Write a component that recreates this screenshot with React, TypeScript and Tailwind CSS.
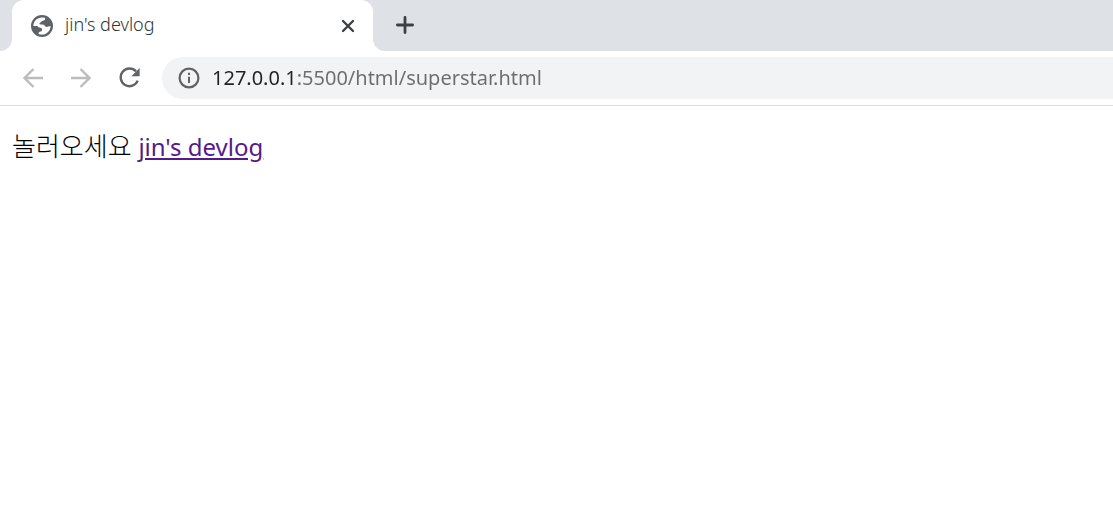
import { useState } from 'react'

function GlobeIcon() {
    return (
        <svg width="22" height="22" viewBox="0 0 22 22" aria-hidden="true">
            <circle cx="11" cy="11" r="11" fill="#5f6368" />
            <path
                d="M2.4 11C2.4 6.2 6 2.5 10.8 2.4L14 2.8C14.6 4.4 13.8 5.4 12 5.7C10.6 6 10.4 7 9.4 7.4C8 7.9 8.2 9.4 9.6 9.6H12C13.8 9.8 13.8 11.8 15.4 12C17 12.1 17.8 11 19.6 11C19.5 15.8 15.8 19.5 11 19.6C9.8 19.6 8.8 19.4 7.6 19C7.4 17.6 8.4 16.8 9.6 16.5C11 16.2 11.2 15.4 11 14.2C10.8 13 9.6 12.8 8.4 12.6C6.8 12.4 7.4 11 5.8 11Z"
                fill="#fff"
            />
        </svg>
    )
}

function ArrowIcon({ className = '' }) {
    return (
        <svg width="20" height="20" viewBox="0 0 20 20" fill="none" stroke="currentColor" strokeWidth="2.4" className={className} aria-hidden="true">
            <path d="M20 10H2M10.5 1L1.5 10L10.5 19" />
        </svg>
    )
}

function ReloadIcon() {
    return (
        <svg width="22" height="22" viewBox="0 0 22 22" aria-hidden="true">
            <path d="M17 4.4A8.8 8.8 0 1 0 18.7 13.6" fill="none" stroke="#5f6368" strokeWidth="2.4" />
            <path d="M20.6 1V9.2H12.4Z" fill="#5f6368" />
        </svg>
    )
}

function InfoIcon() {
    return (
        <svg width="22" height="22" viewBox="0 0 22 22" aria-hidden="true">
            <circle cx="11" cy="11" r="9.4" fill="none" stroke="#5f6368" strokeWidth="2.2" />
            <path d="M10 5.8H12V8H10ZM10 9.8H12V16H10Z" fill="#5f6368" />
        </svg>
    )
}

export default function App() {
    const [url, setUrl] = useState('127.0.0.1:5500/html/superstar.html')

    return (
        <div className="min-h-screen bg-white font-['Noto_Sans','Noto_Sans_CJK_KR',sans-serif]">
            {/* Tab strip */}
            <div className="flex h-[51px] bg-white">
                <div className="w-3 rounded-br-xl bg-[#dee1e6]" />
                <div className="w-[361px] bg-[#dee1e6]">
                    <div className="flex h-full items-center rounded-t-xl bg-white pr-4 pl-[19px]">
                        <GlobeIcon />
                        <span className="ml-3 flex-1 pb-0.5 text-[18px] font-light text-[#303336]">jin's devlog</span>
                        <button type="button" aria-label="Close tab" className="p-0.5">
                            <svg width="14" height="14" viewBox="0 0 14 14" stroke="#3c4043" strokeWidth="2.4" strokeLinecap="round" aria-hidden="true">
                                <path d="M2 2L12 12M12 2L2 12" />
                            </svg>
                        </button>
                    </div>
                </div>
                <div className="flex flex-1 items-center rounded-bl-xl bg-[#dee1e6] pb-px pl-[23px]">
                    <button type="button" aria-label="New tab">
                        <svg width="18" height="18" viewBox="0 0 18 18" stroke="#3c4043" strokeWidth="2.8" strokeLinecap="round" aria-hidden="true">
                            <path d="M9 1.4V16.6M1.4 9H16.6" />
                        </svg>
                    </button>
                </div>
            </div>

            {/* Toolbar */}
            <div className="flex h-[55px] items-center border-b border-[#dadce0] pl-[23px]">
                <div className="flex items-center gap-7">
                    <button type="button" aria-label="Back" className="text-[#babcbe]">
                        <ArrowIcon />
                    </button>
                    <button type="button" aria-label="Forward" className="text-[#babcbe]">
                        <ArrowIcon className="rotate-180" />
                    </button>
                    <button type="button" aria-label="Reload">
                        <ReloadIcon />
                    </button>
                </div>
                <label className="ml-[21px] flex h-[42px] flex-1 items-center gap-3 rounded-l-full bg-[#f1f3f4] pl-4">
                    <InfoIcon />
                    <input
                        type="text"
                        aria-label="Address"
                        value={url}
                        onChange={(e) => setUrl(e.target.value)}
                        className="flex-1 bg-[linear-gradient(90deg,#202124_84px,#6a6d71_84px)] bg-clip-text text-[20px] text-transparent caret-black outline-none"
                    />
                </label>
            </div>

            {/* Page */}
            <main className="px-3 py-[22px] text-[26px] leading-9 font-light text-black">
                놀러오세요{' '}
                <a href="#devlog" className="text-[24px] font-normal text-[#551a8b] underline">
                    jin's devlog
                </a>
            </main>
        </div>
    )
}
